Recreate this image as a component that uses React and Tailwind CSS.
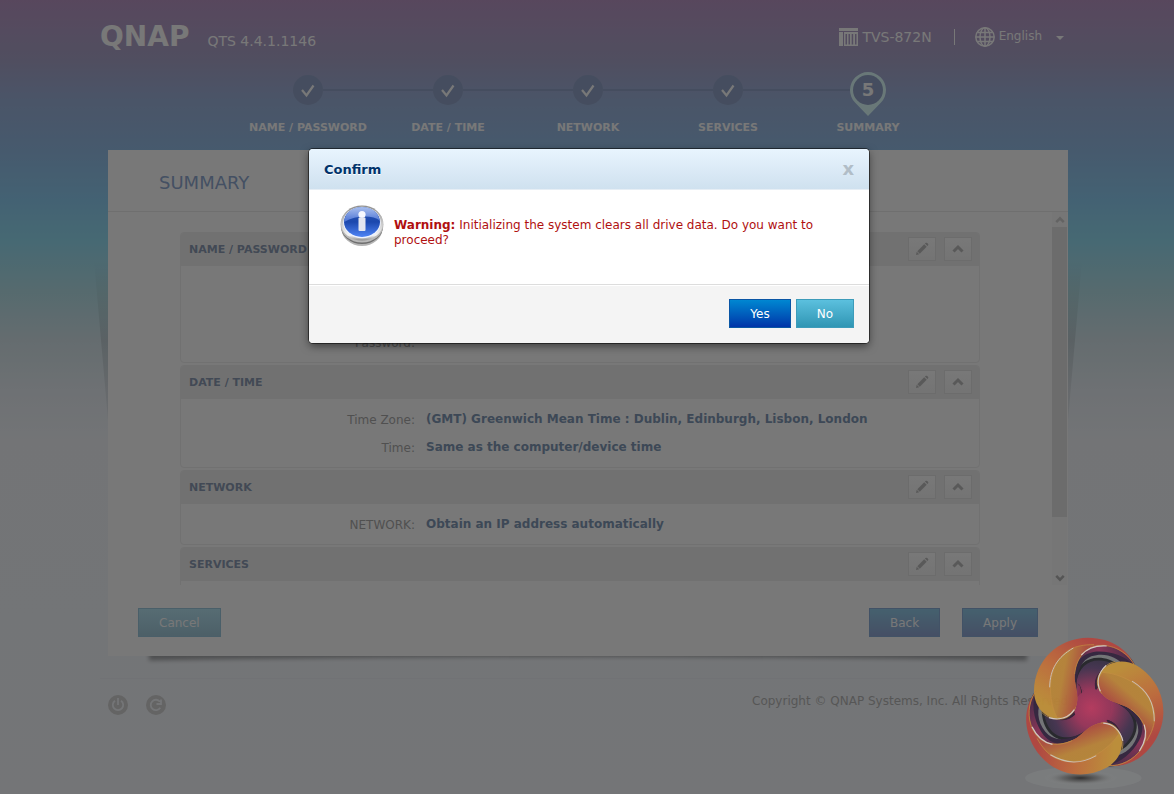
import { useState } from "react";

const steps = ["NAME / PASSWORD", "DATE / TIME", "NETWORK", "SERVICES", "SUMMARY"];

const sections = [
    {
        title: "NAME / PASSWORD",
        bodyClass: "pt-[62px]",
        rows: [{ label: "Password:", value: "" }],
    },
    {
        title: "DATE / TIME",
        bodyClass: "pt-1.5",
        rows: [
            { label: "Time Zone:", value: "(GMT) Greenwich Mean Time : Dublin, Edinburgh, Lisbon, London" },
            { label: "Time:", value: "Same as the computer/device time" },
        ],
    },
    {
        title: "NETWORK",
        bodyClass: "pt-1.5",
        rows: [{ label: "NETWORK:", value: "Obtain an IP address automatically" }],
    },
    {
        title: "SERVICES",
        bodyClass: "pt-1.5",
        rows: [],
    },
];

const App = () => {
    const [open, setOpen] = useState(true);

    return (
        <div className="relative min-h-screen overflow-hidden pl-0.5 font-['DejaVu_Sans',Verdana,sans-serif] text-xs bg-[#f6f9fd] bg-[linear-gradient(180deg,#bb98c6_0px,#aba7cc_60px,#9eb4dd_100px,#96bfe8_150px,#8fd0f5_200px,#96dff5_240px,#b6e2ea_290px,#d6e6ec_340px,#e9f0f6_390px,#f4f7fb_440px,#f6f9fd_794px)]">
            <div className="max-w-[976px] mx-auto">
                <Header />
                <Steps />
                <Panel onApply={() => setOpen(true)} />
                <Footer />
            </div>
            {open && <ConfirmDialog onClose={() => setOpen(false)} />}
            <Watermark />
        </div>
    )
}

export default App;

const Header = () => {
    return (
        <header className="flex items-center justify-between h-[72px] pt-0.5 pr-3 text-white">
            <div className="flex items-baseline gap-[18px]">
                <span className="text-[28px] leading-8 font-bold">QNAP</span>
                <span className="text-sm">QTS 4.4.1.1146</span>
            </div>
            <div className="flex items-center">
                <NasIcon />
                <span className="ml-1 text-sm">TVS-872N</span>
                <span className="ml-[22px] w-px h-4 bg-white"></span>
                <button className="flex items-center ml-5">
                    <GlobeIcon />
                    <span className="ml-1 pb-0.5">English</span>
                    <svg className="ml-3.5 mt-0.5 w-2 h-1" viewBox="0 0 8 4"><path d="M0 0H8L4 4Z" fill="#fff" /></svg>
                </button>
            </div>
        </header>
    )
}

const Steps = () => {
    return (
        <ol className="grid grid-cols-5 w-[700px] h-[78px] mx-auto text-white">
            {steps.map((step, i) => (
                <li key={step} className="relative flex flex-col items-center">
                    {i < steps.length - 1 && (
                        <span className="absolute top-[17px] left-[85px] w-[110px] h-0.5 bg-[#94a5c9]"></span>
                    )}
                    <div className="flex items-center justify-center h-12">
                        {i < steps.length - 1 ? <DoneMark /> : <CurrentMark nb={i + 1} />}
                    </div>
                    <span className="text-[11px] leading-4 font-bold whitespace-nowrap">{step}</span>
                </li>
            ))}
        </ol>
    )
}

const DoneMark = () => (
    <svg className="w-[30px] h-[42px]" viewBox="0 0 30 42">
        <circle cx="15" cy="15" r="15" fill="#94a5c9" />
        <path d="M9 15L13.500 20.500L20.500 10.500" fill="none" stroke="#fff" strokeWidth="2.200" />
    </svg>
)

const CurrentMark = ({ nb }) => (
    <div className="relative w-9 h-12">
        <svg className="w-9 h-12" viewBox="0 0 36 48">
            <path d="M18 44L5 30.500A18 18 0 1 1 31 30.500Z" fill="#dfffff" />
            <circle cx="18" cy="18" r="15" fill="#94a5c9" />
        </svg>
        <span className="absolute inset-x-0 top-0 h-9 flex items-center justify-center text-lg font-bold">{nb}</span>
    </div>
)

const Panel = ({ onApply }) => {
    return (
        <main className="relative mx-2">
            <PanelShadow />
            <div className="relative bg-white pb-[19px]">
                <h1 className="h-[62px] pl-[51px] text-lg/[66px] text-[#90aad2] border-b border-[#ececec]">SUMMARY</h1>
                <div className="flex h-[373px] overflow-hidden">
                    <div className="flex-1 pl-[72px] pr-[72px] pt-5">
                        {sections.map((section) => (
                            <Section key={section.title} section={section} />
                        ))}
                    </div>
                    <div className="flex flex-col w-[15px] mr-px bg-[#fafafa]">
                        <div className="flex items-center justify-center h-[15px]">
                            <Chevron className="w-2.5 h-2.5 text-[#d2d2d2]" />
                        </div>
                        <div className="h-[290px] bg-[#e6e6e6]"></div>
                        <div className="flex items-center justify-center h-[15px] mt-auto">
                            <Chevron className="w-2.5 h-2.5 rotate-180 text-[#b4b4b4]" />
                        </div>
                    </div>
                </div>
                <div className="flex mt-[23px] px-[30px] text-white">
                    <button className="h-[29px] px-5 border border-[#9dcbe0] bg-linear-to-b from-[#b8e6f5] to-[#a3cbdc]">Cancel</button>
                    <button className="h-[29px] px-5 ml-auto border border-[#8caed8] bg-linear-to-b from-[#92cdea] to-[#94a8d6]">Back</button>
                    <button onClick={onApply} className="h-[29px] px-5 ml-[22px] border border-[#8caed8] bg-linear-to-b from-[#92cdea] to-[#94a8d6]">Apply</button>
                </div>
            </div>
        </main>
    )
}

const Section = ({ section }) => {
    return (
        <section className="mb-0.5 rounded-sm border border-[#f0f0f0] overflow-hidden">
            <div className="flex items-center h-[33px] pl-2 pr-[7px] pb-px bg-[#f0f0f0]">
                <h2 className="flex-1 pt-0.5 text-[11px] font-bold text-[#8c9cb4]">{section.title}</h2>
                <button aria-label="Edit" className="flex items-center justify-center w-7 h-6 border border-[#e6e6e6] bg-linear-to-b from-white to-[#f6f6f6]">
                    <PencilIcon />
                </button>
                <button aria-label="Collapse" className="flex items-center justify-center w-7 h-6 ml-2 border border-[#e6e6e6] bg-linear-to-b from-white to-[#f6f6f6]">
                    <Chevron className="w-3 h-3 text-[#bebebe]" />
                </button>
            </div>
            <dl className={`${section.bodyClass} pb-1.5`}>
                {section.rows.map((row) => (
                    <div key={row.label} className="flex items-center h-7 gap-[11px]">
                        <dt className="w-[234px] pt-px text-right text-[#ababab]">{row.label}</dt>
                        <dd className="font-bold text-[#829ab8]">{row.value}</dd>
                    </div>
                ))}
            </dl>
        </section>
    )
}

const Footer = () => {
    return (
        <footer className="flex justify-between mt-[22px] pt-4 pl-2 pr-1 border-t border-[#f0f3f8]">
            <div className="flex gap-[18px]">
                <button aria-label="Power">
                    <svg className="w-5 h-5" viewBox="0 0 20 20">
                        <circle cx="10" cy="10" r="10" fill="#d4d4d4" />
                        <path d="M7 5.700A5.200 5.200 0 1 0 13 5.700M10 3V10" fill="none" stroke="#f6f9fd" strokeWidth="1.800" />
                    </svg>
                </button>
                <button aria-label="Restart">
                    <svg className="w-5 h-5" viewBox="0 0 20 20">
                        <circle cx="10" cy="10" r="10" fill="#d4d4d4" />
                        <path d="M14.300 12.800A5.200 5.200 0 1 1 14 6.700M15 4.500V9H10.500" fill="none" stroke="#f6f9fd" strokeWidth="1.800" />
                    </svg>
                </button>
            </div>
            <p className="leading-3 text-[#b8b8b8]">Copyright © QNAP Systems, Inc. All Rights Reserved.</p>
        </footer>
    )
}

const ConfirmDialog = ({ onClose }) => {
    return (
        <div className="absolute inset-0 flex justify-center items-start pt-[149px] pl-1 bg-black/53">
            <div role="dialog" aria-labelledby="confirm-title" className="w-[560px] rounded overflow-hidden bg-white shadow-[0_0_0_1px_#00000080,0_3px_8px_#00000080]">
                <div className="flex items-center justify-between h-[41px] px-[15px] pt-px border-b border-[#e6eef5] bg-linear-to-b from-[#e8f4fe] to-[#cfe1ef]">
                    <h2 id="confirm-title" className="text-[13px] font-bold text-[#00336b] [text-shadow:0_1px_0_#fff]">Confirm</h2>
                    <button onClick={onClose} aria-label="Close" className="text-lg/5 pb-0.5 font-bold text-[#b1bdc7]">x</button>
                </div>
                <div className="flex h-[94px] pl-[31px] pr-4 pt-[15px]">
                    <InfoIcon />
                    <p className="flex-1 ml-2.5 mt-[13px] leading-[15px] text-[#b01010]">
                        <b>Warning:</b> Initializing the system clears all drive data. Do you want to proceed?
                    </p>
                </div>
                <div className="flex justify-end gap-[5px] px-[15px] pt-[14px] pb-[15px] border-t border-[#dddddd] bg-[#f4f4f4] text-white [text-shadow:0_-1px_0_#00000040] shadow-[inset_0_1px_0_#fff]">
                    <button onClick={onClose} className="h-[29px] px-5 border border-[#0a56a5] bg-linear-to-b from-[#0387d1] to-[#0133a8]">Yes</button>
                    <button onClick={onClose} className="h-[29px] px-5 border border-[#3d9cba] bg-linear-to-b from-[#5bc0de] to-[#2f96b4]">No</button>
                </div>
            </div>
        </div>
    )
}

/* panel shadows: slanted on both sides, lifted corners at the bottom */
const PanelShadow = () => (
    <>
        <svg className="absolute -left-3.5 top-[110px] w-3.5 h-[160px]" viewBox="0 0 14 160">
            <defs>
                <linearGradient id="side" x1="0" y1="0" x2="0" y2="1">
                    <stop offset="0" stopColor="#000" stopOpacity="0" />
                    <stop offset=".5" stopColor="#000" stopOpacity=".1" />
                    <stop offset="1" stopColor="#000" stopOpacity=".05" />
                </linearGradient>
            </defs>
            <path d="M0 0H14V160Z" fill="url(#side)" />
        </svg>
        <svg className="absolute -right-3.5 top-[110px] w-3.5 h-[160px]" viewBox="0 0 14 160">
            <path d="M14 0H0V160Z" fill="url(#side)" />
        </svg>
        <svg className="absolute left-0 -bottom-4 w-full h-6" viewBox="0 0 960 24" preserveAspectRatio="none">
            <defs>
                <filter id="soft" filterUnits="userSpaceOnUse" x="0" y="-10" width="960" height="44"><feGaussianBlur stdDeviation="2" /></filter>
            </defs>
            <path d="M41 0V12.500Q480 5 919 12.500V0Z" fill="#000" opacity=".32" filter="url(#soft)" />
        </svg>
    </>
)

const Chevron = ({ className }) => (
    <svg className={className} viewBox="0 0 12 12">
        <path d="M1.500 8.500L6 4L10.500 8.500" fill="none" stroke="currentColor" strokeWidth="3" />
    </svg>
)

const PencilIcon = () => (
    <svg className="w-3.5 h-3.5" viewBox="0 0 14 14" fill="#bebebe">
        <path d="M1 13L1.700 9.800L4.200 12.300ZM2.300 9.200L9.200 2.300L11.700 4.800L4.800 11.700ZM9.900 1.600L10.800 0.800Q11.500 0.400 12.200 1L13 1.800Q13.600 2.500 13.200 3.200L12.400 4.100Z" />
    </svg>
)

const NasIcon = () => (
    <svg className="w-[19px] h-[18px]" viewBox="0 0 19 18" fill="#fff">
        <path d="M0 0H19V3H0ZM0 4H4V18H0ZM5 4H19V18H5ZM6.500 6V16.500H8V6ZM9.500 6V16.500H11V6ZM12.700 6V16.500H14.200V6ZM16 6V16.500H17.500V6Z" fillRule="evenodd" />
    </svg>
)

const GlobeIcon = () => (
    <svg className="w-5 h-5" viewBox="0 0 20 20" fill="none" stroke="#fff" strokeWidth="1.500">
        <circle cx="10" cy="10" r="9.200" />
        <ellipse cx="10" cy="10" rx="5" ry="9.200" />
        <path d="M10 1V19M1 10H19M2.500 5.500H17.500M2.500 14.500H17.500" />
    </svg>
)

const InfoIcon = () => (
    <svg className="w-[44px] h-[42px]" viewBox="0 0 44 42">
        <defs>
            <linearGradient id="rim" x1="0" y1="0" x2="0" y2="1">
                <stop offset="0" stopColor="#8e8e8e" />
                <stop offset=".5" stopColor="#c9c9c9" />
                <stop offset=".85" stopColor="#f4f4f4" />
                <stop offset="1" stopColor="#8a8a8a" />
            </linearGradient>
            <linearGradient id="disc" x1="0" y1="0" x2="0" y2="1">
                <stop offset="0" stopColor="#2a55b0" />
                <stop offset=".5" stopColor="#1c48ae" />
                <stop offset="1" stopColor="#4f84f5" />
            </linearGradient>
            <linearGradient id="gloss" x1="0" y1="0" x2="0" y2="1">
                <stop offset="0" stopColor="#a9bfee" />
                <stop offset="1" stopColor="#4a72d4" />
            </linearGradient>
        </defs>
        <ellipse cx="22" cy="23.500" rx="20.500" ry="17.500" fill="#b4b4b4" />
        <ellipse cx="22" cy="21.500" rx="21" ry="17.500" fill="#6e6e6e" />
        <ellipse cx="22" cy="19.500" rx="21.500" ry="18" fill="#b9b9b9" />
        <ellipse cx="22" cy="18" rx="21" ry="17.500" fill="url(#rim)" />
        <ellipse cx="22" cy="17.500" rx="18.800" ry="15.800" fill="#eef3ff" />
        <ellipse cx="22" cy="17" rx="18" ry="15" fill="url(#disc)" />
        <path d="M4.200 15.500C6 7 13 2 22 2S38 7 39.800 15.500C33 10 16 10 4.200 17Z" fill="url(#gloss)" />
        <circle cx="22" cy="9.500" r="3.600" fill="#f6f8ff" />
        <rect x="18.500" y="12.500" width="7" height="13.500" rx="1" fill="#e3e6f0" />
    </svg>
)

const turns = ["rotate(0 266 252)", "rotate(120 266 252)", "rotate(240 266 252)"];

const Watermark = () => (
    <svg className="absolute right-0 bottom-0 w-[170px] h-[170px] pointer-events-none" viewBox="0 0 510 510">
        <defs>
            <radialGradient id="core" gradientUnits="userSpaceOnUse" cx="262" cy="252" r="160">
                <stop offset="0" stopColor="#b8395e" />
                <stop offset=".35" stopColor="#98355a" />
                <stop offset=".75" stopColor="#453350" />
                <stop offset="1" stopColor="#33303f" />
            </radialGradient>
            <linearGradient id="tail" gradientUnits="userSpaceOnUse" x1="214" y1="170" x2="396" y2="110">
                <stop offset="0" stopColor="#2f2840" />
                <stop offset=".5" stopColor="#8c3357" />
                <stop offset="1" stopColor="#3d2944" />
            </linearGradient>
            <linearGradient id="outer" gradientUnits="userSpaceOnUse" x1="120" y1="240" x2="250" y2="50">
                <stop offset="0" stopColor="#bf9038" />
                <stop offset=".5" stopColor="#c06c3c" />
                <stop offset="1" stopColor="#b34640" />
            </linearGradient>
            <linearGradient id="inner" gradientUnits="userSpaceOnUse" x1="145" y1="170" x2="225" y2="185">
                <stop offset="0" stopColor="#b88638" />
                <stop offset=".35" stopColor="#b98439" />
                <stop offset="1" stopColor="#b0503f" />
            </linearGradient>
            <radialGradient id="ground">
                <stop offset="0" stopColor="#2e2e2e" />
                <stop offset=".5" stopColor="#5a5a5a" stopOpacity=".7" />
                <stop offset="1" stopColor="#8a8c8d" stopOpacity="0" />
            </radialGradient>
        </defs>
        <ellipse cx="238" cy="462" rx="175" ry="34" fill="#7f8182" opacity=".6" />
        <ellipse cx="230" cy="462" rx="110" ry="22" fill="url(#ground)" />
        <g opacity=".95">
            {turns.map((turn) => (
                <g key={turn} transform={turn}>
                    <path d="M266 262L205 270C225 235 208 190 212 160C222 105 285 78 352 126C300 122 270 165 286 205C296 235 330 252 355 250Z" fill="#26262b" />
                    <path d="M266 262L205 270C225 235 214 195 218 170C228 118 270 92 335 122C290 130 262 165 278 205C290 238 325 254 355 252Z" fill="url(#core)" />
                    <path d="M345 122C295 122 262 158 276 200C288 238 325 254 350 252C310 240 290 215 288 180C290 155 305 134 345 122Z" fill="#3a2038" />
                    <path d="M345 122C305 128 276 158 284 196C292 232 325 252 350 252C315 236 298 205 296 175C298 150 315 132 345 122Z" fill="#8a2f4e" />
                </g>
            ))}
            <circle cx="266" cy="252" r="56" fill="url(#core)" />
            {turns.map((turn) => (
                <g key={turn} transform={turn}>
                    <path d="M212 190C204 110 235 62 290 60C340 60 380 90 398 132L358 124C340 98 300 84 262 97C235 108 220 135 216 190Z" fill="#33243e" />
                    <path d="M214 130C228 82 262 62 300 64C345 68 375 92 390 124C360 92 310 78 268 84C240 90 224 105 214 130Z" fill="url(#tail)" />
                </g>
            ))}
            {turns.map((turn) => (
                <g key={turn} transform={turn}>
                    <path d="M158 285C120 280 90 245 90 200C92 110 160 42 252 41C325 42 375 78 396 132C372 85 325 60 280 64C235 72 212 110 212 165C216 195 226 225 215 250C205 275 185 288 158 285Z" fill="url(#outer)" />
                    <path d="M158 279C125 210 135 115 195 78C225 62 265 58 300 64C240 68 212 110 212 165C216 195 226 225 215 250C205 273 185 284 158 279Z" fill="url(#inner)" />
                    <path d="M158 279C125 210 135 115 195 78C215 66 240 62 270 62" fill="none" stroke="#c8903f" strokeWidth="2" />
                    <path d="M137 190C138 135 160 100 208 72" fill="none" stroke="#d0c4b4" strokeWidth="3" />
                    <path d="M112 264C125 278 140 284 158 285C185 288 205 275 215 250M212 150C218 95 250 62 300 64C340 68 375 90 394 128" fill="none" stroke="#c49440" strokeWidth="2" />
                    <path d="M135 281C168 291 195 280 211 257M232 93C252 70 275 64 308 66" fill="none" stroke="#d8ccc8" strokeWidth="3.500" />
                </g>
            ))}
        </g>
    </svg>
)
